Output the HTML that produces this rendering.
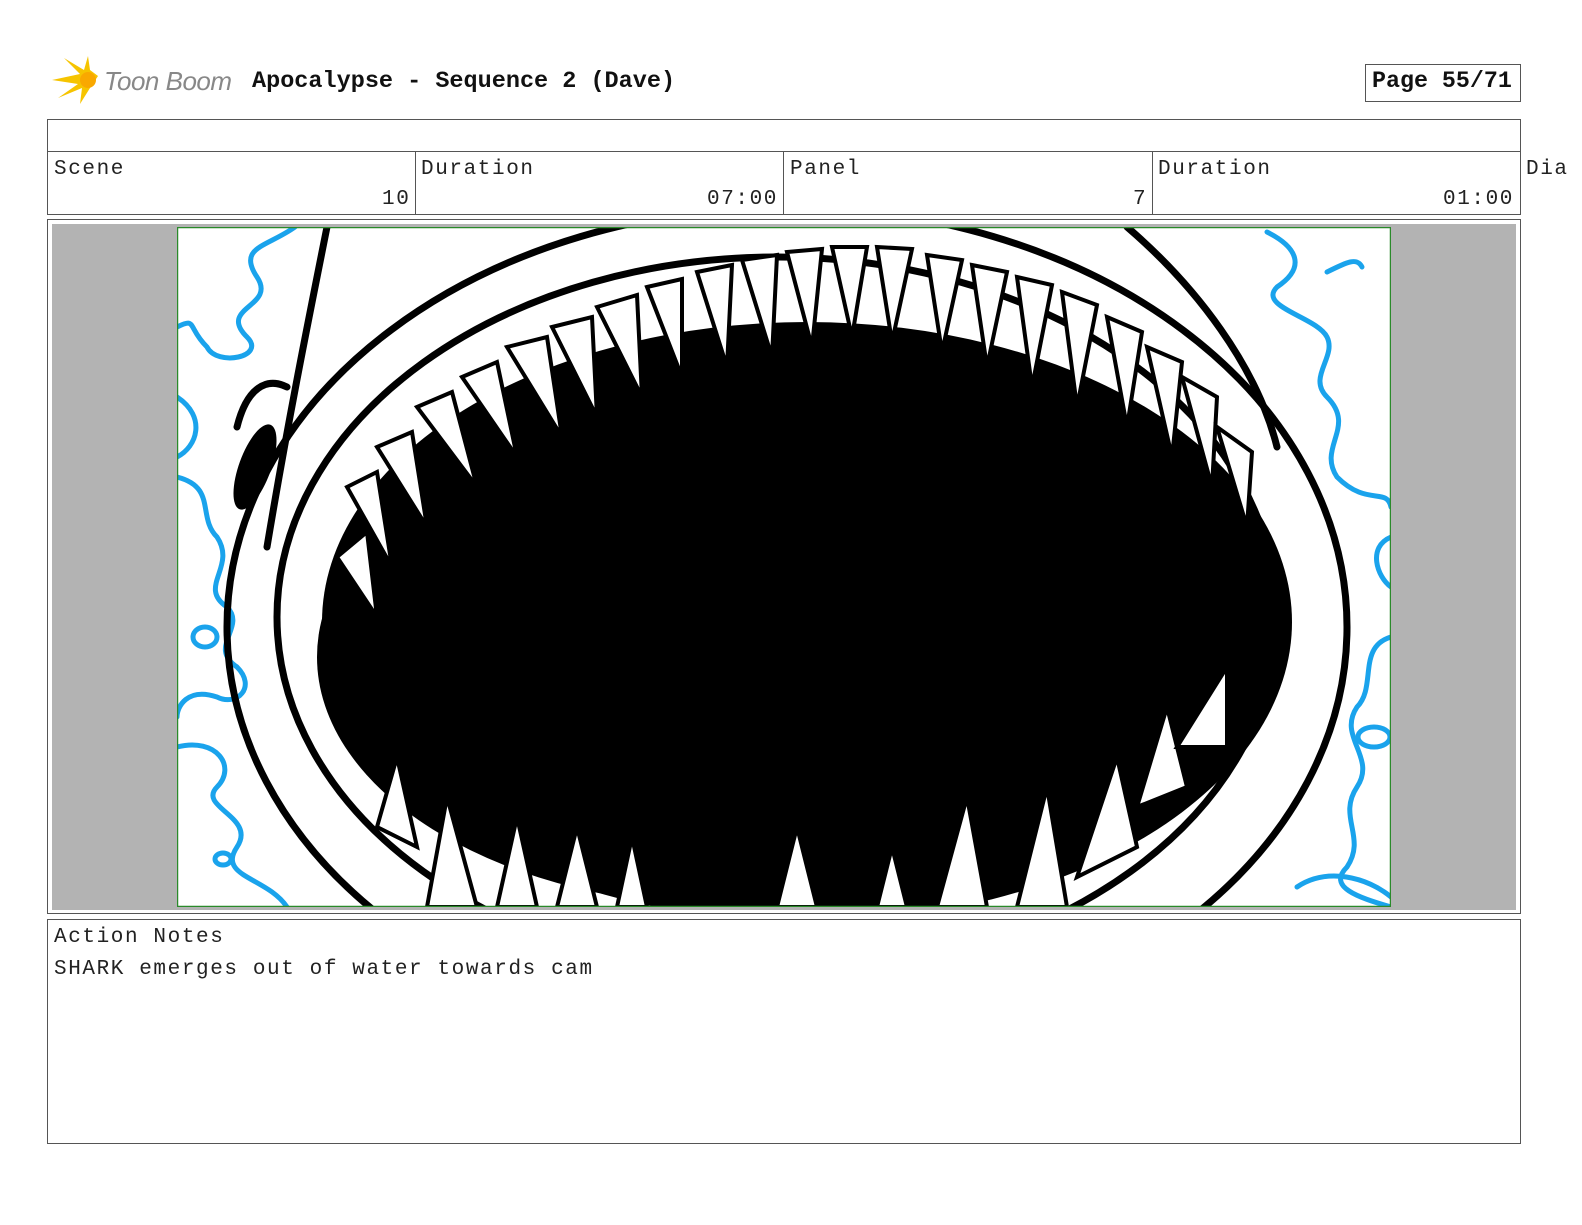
<!DOCTYPE html>
<html><head><meta charset="utf-8"><style>
*{margin:0;padding:0;box-sizing:border-box}
body{width:1582px;height:1225px;background:#fff;position:relative;overflow:hidden;font-family:"Liberation Mono",monospace;color:#222}
.a{position:absolute}
.b{border:1px solid #555}
.t{font-size:21px;letter-spacing:1.6px;white-space:nowrap}
</style></head><body>
<svg class="a" style="left:50px;top:56px" width="52" height="50" viewBox="0 0 52 50">
<path d="M2 24 L30 18 L14 2 L34 14 L38 0 L40 14 L48 20 L40 32 L30 48 L32 32 L8 42 L28 28 Z" fill="#f6c400"/>
<circle cx="38" cy="24" r="8" fill="#f9a800"/>
</svg>
<div class="a" style="left:104px;top:66px;font-family:'Liberation Sans',sans-serif;font-style:italic;font-size:26px;color:#888;letter-spacing:-0.5px">Toon Boom</div>
<div class="a" style="left:252px;top:68px;font-weight:bold;font-size:23.5px;color:#111">Apocalypse - Sequence 2 (Dave)</div>
<div class="a b" style="left:1365px;top:64px;width:156px;height:38px;font-weight:bold;font-size:23.3px;color:#111;padding:3px 0 0 6px">Page 55/71</div>

<div class="a b" style="left:47px;top:119px;width:1474px;height:96px"></div>
<div class="a" style="left:47px;top:151px;width:1474px;border-top:1px solid #555"></div>
<div class="a" style="left:415px;top:151px;height:64px;border-left:1px solid #555"></div>
<div class="a" style="left:783px;top:151px;height:64px;border-left:1px solid #555"></div>
<div class="a" style="left:1152px;top:151px;height:64px;border-left:1px solid #555"></div>
<div class="a t" style="left:54px;top:158px">Scene</div>
<div class="a t" style="left:421px;top:158px">Duration</div>
<div class="a t" style="left:790px;top:158px">Panel</div>
<div class="a t" style="left:1158px;top:158px">Duration</div>
<div class="a t" style="left:1526px;top:158px">Dia</div>
<div class="a t" style="left:382px;top:188px">10</div>
<div class="a t" style="left:707px;top:188px">07:00</div>
<div class="a t" style="left:1133px;top:188px">7</div>
<div class="a t" style="left:1443px;top:188px">01:00</div>

<div class="a b" style="left:47px;top:219px;width:1474px;height:695px"></div>
<div class="a" style="left:52px;top:224px;width:1464px;height:686px;background:#b3b3b3"></div>
<svg class="a" style="left:177px;top:227px" width="1214" height="680" viewBox="0 0 1214 680">
<rect x="0" y="0" width="1214" height="680" fill="#fff"/>
<defs><clipPath id="c"><rect width="1214" height="680"/></clipPath></defs>
<g clip-path="url(#c)">
<g fill="none" stroke="#1aa3ec" stroke-width="5" stroke-linecap="round">
<path d="M118 0 C90 20 60 20 80 50 C100 80 40 80 70 110 C90 130 40 140 30 120 C10 100 20 90 0 100"/>
<path d="M0 170 C30 190 20 220 0 230 M0 250 C40 260 20 290 40 310 C60 340 20 360 50 380 C70 400 30 420 60 440 C80 460 60 480 40 470 C10 460 0 480 0 490"/>
<path d="M0 520 C40 510 60 540 40 560 C20 580 80 590 60 620 C40 650 90 650 110 680"/>
<path d="M1090 5 C1120 20 1130 40 1100 60 C1080 80 1140 90 1150 110 C1160 130 1130 150 1150 170 C1180 200 1140 220 1160 250 C1190 280 1210 260 1214 280"/>
<path d="M1214 310 C1190 320 1200 350 1214 360 M1214 410 C1180 420 1200 460 1180 480 C1160 510 1200 530 1180 560 C1160 590 1190 610 1170 640 C1150 660 1180 670 1214 680"/>
<path d="M1120 660 C1150 640 1190 650 1214 670"/>
<ellipse cx="1197" cy="510" rx="16" ry="10"/><ellipse cx="28" cy="410" rx="12" ry="10"/><ellipse cx="46" cy="632" rx="8" ry="6"/>
<path d="M1150 45 C1170 35 1180 30 1185 40"/>
</g>
<g fill="none" stroke="#000" stroke-width="7" stroke-linecap="round">
<ellipse cx="600" cy="390" rx="500" ry="360"/>
<ellipse cx="610" cy="400" rx="560" ry="420"/>
<path d="M150 0 C130 100 110 200 90 320"/>
<path d="M60 200 C70 160 90 150 110 160"/>
<path d="M950 0 C1020 60 1080 140 1100 220"/>
</g>
<ellipse cx="78" cy="240" rx="16" ry="45" fill="#000" transform="rotate(20 78 240)"/>
<ellipse cx="630" cy="395" rx="485" ry="300" fill="#000"/>
<ellipse cx="560" cy="430" rx="420" ry="250" fill="#000"/>
<g fill="#fff" stroke="#000" stroke-width="4">
<path d="M160 330 L190 305 L200 390 Z"/><path d="M170 260 L200 245 L215 340 Z"/><path d="M200 220 L235 205 L250 300 Z"/>
<path d="M240 180 L275 165 L300 260 Z"/><path d="M285 150 L320 135 L340 230 Z"/><path d="M330 120 L370 110 L385 210 Z"/>
<path d="M375 100 L415 90 L420 190 Z"/><path d="M420 80 L460 68 L465 170 Z"/><path d="M470 60 L505 52 L505 150 Z"/>
<path d="M520 45 L555 38 L550 140 Z"/><path d="M565 33 L600 28 L595 130 Z"/><path d="M610 25 L645 22 L635 120 Z"/>
<path d="M655 20 L690 20 L675 110 Z"/><path d="M700 20 L735 22 L715 115 Z"/><path d="M750 28 L785 33 L765 125 Z"/>
<path d="M795 38 L830 45 L810 140 Z"/><path d="M840 50 L875 58 L855 160 Z"/><path d="M885 65 L920 78 L900 180 Z"/>
<path d="M930 90 L965 105 L950 200 Z"/><path d="M970 120 L1005 135 L995 230 Z"/><path d="M1005 150 L1040 170 L1035 260 Z"/>
<path d="M1040 200 L1075 225 L1070 300 Z"/>
<path d="M250 680 L270 570 L300 680 Z"/><path d="M320 680 L340 590 L360 680 Z"/><path d="M380 680 L400 600 L420 680 Z"/>
<path d="M440 680 L455 610 L470 680 Z"/><path d="M700 680 L715 620 L730 680 Z"/>
<path d="M760 680 L790 570 L810 680 Z"/><path d="M840 680 L870 560 L890 680 Z"/><path d="M900 650 L940 530 L960 620 Z"/>
<path d="M960 580 L990 480 L1010 560 Z"/><path d="M1000 520 L1050 440 L1050 520 Z"/>
<path d="M200 600 L220 530 L240 620 Z"/><path d="M600 680 L620 600 L640 680 Z"/>
</g>
</g>
<rect x="0.5" y="0.5" width="1213" height="679" fill="none" stroke="#2a8a2a" stroke-width="1.5"/>
</svg>

<div class="a b" style="left:47px;top:919px;width:1474px;height:225px"></div>
<div class="a t" style="left:54px;top:926px">Action Notes</div>
<div class="a t" style="left:54px;top:958px">SHARK emerges out of water towards cam</div>
</body></html>
